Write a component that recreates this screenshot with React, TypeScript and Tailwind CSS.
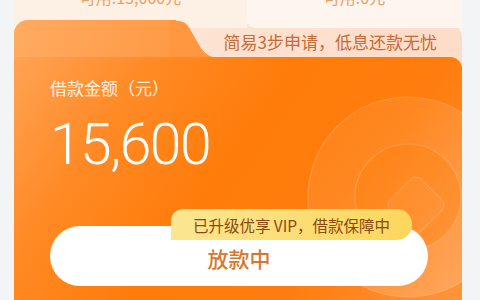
import React from 'react';

const font = { fontFamily: '"Noto Sans CJK SC", "Noto Sans", sans-serif' };

function Rings() {
  return (
    <svg
      className="absolute left-[290px] top-[36px]"
      width="210"
      height="210"
      viewBox="0 0 210 210"
      fill="none"
    >
      <defs>
        <linearGradient id="ringFill" x1="0" y1="0" x2="1" y2="1">
          <stop offset="0%" stopColor="#ffffff" stopOpacity="0.03" />
          <stop offset="100%" stopColor="#ffffff" stopOpacity="0.2" />
        </linearGradient>
      </defs>
      <circle cx="104" cy="104" r="100" fill="url(#ringFill)" stroke="#ffffff" strokeOpacity="0.18" strokeWidth="1.2" />
      <circle cx="104" cy="104" r="53" fill="#ff7d0c" fillOpacity="0.35" stroke="#ffffff" strokeOpacity="0.18" strokeWidth="1.2" />
      <rect
        x="90"
        y="90"
        width="44"
        height="44"
        rx="8"
        transform="rotate(45 112 112)"
        stroke="#ffffff"
        strokeOpacity="0.16"
        strokeWidth="1.2"
        fill="#ffffff"
        fillOpacity="0.04"
      />
    </svg>
  );
}

export default function App() {
  return (
    <div className="h-[300px] w-[480px] overflow-hidden bg-[#f3f4f6]" style={font}>
      <div className="mx-[14px] w-[448px] bg-[#fdf1e6]">
        {/* quota row, cut at the top */}
        <div className="flex h-[28px]">
          <div className="flex flex-1 justify-center bg-[#fdf0e4]">
            <span className="-mt-[11px] text-[16px] leading-[16px] text-[#e9a068]">可用:15,000元</span>
          </div>
          <div className="flex w-[215px] justify-center rounded-bl-[8px] bg-[#fdf5ee]">
            <span className="-mt-[11px] text-[16px] leading-[16px] text-[#e9a068]">可用:0元</span>
          </div>
        </div>

        {/* loan card */}
        <div className="-mt-[4px] rounded-t-[14px] bg-[linear-gradient(90deg,#fee8da_0%,#fddcc8_100%)]">
          <div className="flex h-[33px]">
            <div className="-mt-[4px] h-[37px] w-[156px] rounded-tl-[14px] bg-[linear-gradient(110deg,#ffab62_0%,#ff9a44_100%)]" />
            <svg className="-mt-[4px] shrink-0" width="50" height="37" viewBox="0 0 50 37">
              <path
                d="M0 0 H6 C13 0 16 2 20 8 L31 27 C36 34 40 37 50 37 L0 37 Z"
                fill="#ff9740"
              />
              <path
                d="M6 0 C13 0 16 2 20 8 L31 27 C36 34 40 37 50 37"
                fill="none"
                stroke="#ffe6cf"
                strokeWidth="1.3"
              />
            </svg>
            <div className="flex flex-1 items-center justify-end pr-[25px] pt-[3px]">
              <span className="text-[17px] leading-[20px] text-[#c56a38]">简易3步申请，低息还款无忧</span>
            </div>
          </div>

          <div className="relative h-[260px] overflow-hidden rounded-tr-[12px] bg-[linear-gradient(125deg,#ffa355_0%,#ff8a26_22%,#ff7c0a_45%,#ff7d0e_70%,#ff963e_100%)]">
            <Rings />
            <div className="relative px-[36px] pt-[20px]">
              <div className="text-[17px] leading-[22px] text-[#fff1e2]">借款金额（元）</div>
              <div
                className="mt-[16px] text-[57px] font-light leading-[60px] tracking-[-1.5px] text-white"
                style={{ fontFamily: 'Roboto, "Noto Sans", sans-serif' }}
              >
                15,600
              </div>

              <div className="relative mt-[51px] w-[378px]">
                <div className="absolute -top-[17px] left-[121px] z-10 flex h-[31px] w-[241px] items-center justify-center rounded-tl-[12px] rounded-tr-[15px] rounded-br-[15px] bg-[linear-gradient(90deg,#fbe692_0%,#fdd65c_100%)]">
                  <span className="text-[15.5px] leading-[18px] text-[#8a4912]">已升级优享 VIP，借款保障中</span>
                </div>
                <div className="flex h-[60px] items-center justify-center rounded-full bg-white pt-[4px]">
                  <span className="text-[21px] font-medium leading-[24px] text-[#d9762e]">放款中</span>
                </div>
              </div>
            </div>
          </div>
        </div>
      </div>
    </div>
  );
}
